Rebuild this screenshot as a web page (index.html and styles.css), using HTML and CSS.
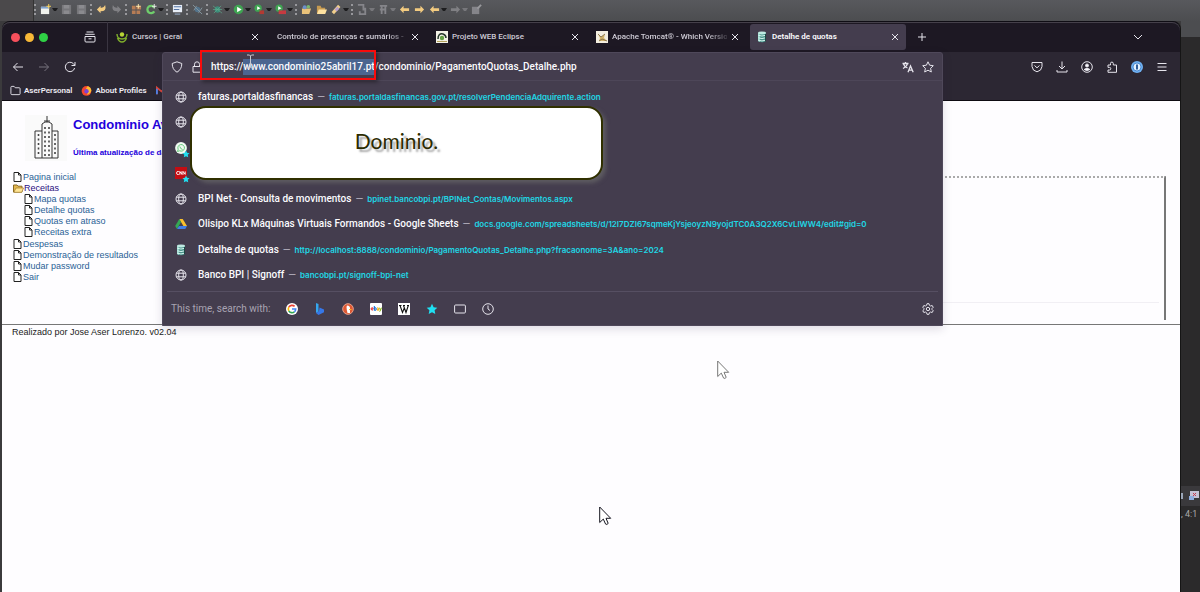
FILE: index.html
```html
<!DOCTYPE html>
<html lang="pt">
<head>
<meta charset="utf-8">
<title>Detalhe de quotas</title>
<link rel="stylesheet" href="styles.css">
</head>
<body>
<svg class="defs" aria-hidden="true">
  <symbol id="close" viewBox="0 0 8 8"><path d="M1 1l6 6M7 1L1 7"/></symbol>
  <symbol id="globe" viewBox="0 0 12 12"><circle cx="6" cy="6" r="5"/><ellipse cx="6" cy="6" rx="2.3" ry="5"/><path d="M1.3 4.2h9.4M1.3 7.8h9.4"/></symbol>
  <symbol id="star" viewBox="0 0 12 12"><path d="M6 .8l1.600 3.400 3.700.5-2.700 2.600.7 3.700L6 9.200 2.700 11l.7-3.700L.7 4.700l3.700-.5z"/></symbol>
  <symbol id="db" viewBox="0 0 12 12"><path d="M2 2v8q4 2.400 8 0V2z" fill="#4a948b"/><path d="M2 2v8q.8.7 1.800.9V2z" fill="#9fdcd2"/><ellipse cx="6" cy="2" rx="4" ry="1.400" fill="#bfeae2"/><path d="M2.300 4.300q3.700 1.500 7.200 0M2.300 6.800q3.700 1.500 7.200 0M2.300 9.200q3.700 1.500 7.200 0" fill="none" stroke="#d8f7f1"/><path d="M9.500 3v7.300" stroke="#1d4643" fill="none"/></symbol>
  <symbol id="doc" viewBox="0 0 9 10"><path d="M1 .5h4.500l2.500 2.500v6.500H1z" fill="#fff" stroke="#222"/><path d="M5.500.5V3H8" fill="none" stroke="#222"/></symbol>
  <symbol id="pointer" viewBox="0 0 13 20"><path d="M.7 1v15.500l3.600-3.400 2.300 5q1.200 1 2.600-.7L7 12.300h4.700z"/></symbol>
  <symbol id="disk" viewBox="0 0 12 12"><path d="M1 1h10v10H1z" fill="#77777b"/><path d="M3 1h6v4H3zM3 7h6v4H3z" fill="#8b8b8f"/></symbol>
  <symbol id="arrow" viewBox="0 0 12 12"><path d="M1 6l4-4v2.500h6v3H5V10z"/></symbol>
  <symbol id="bend" viewBox="0 0 12 12"><path d="M1 6l4-4v2q3 1 5-3 2 7-5 7v2z"/></symbol>
</svg>

<header class="ide" aria-label="Barra do IDE">
  <div class="ide-edge"></div>
  <div class="ide-tools">
    <i class="grip"></i>
    <svg class="tool" viewBox="0 0 12 12"><path d="M1 3h9v8H1z" fill="#f1f3ee"/><path d="M1 3h9v2H1z" fill="#7fa3d0"/><path d="M9.500 0v5M7 2.500h5" stroke="#ffd75a"/></svg><i class="caret"></i>
    <svg class="tool"><use href="#disk"/></svg><svg class="tool"><use href="#disk"/></svg>
    <i class="grip"></i>
    <svg class="tool gold"><use href="#bend"/></svg><svg class="tool dim flip"><use href="#bend"/></svg>
    <i class="grip"></i>
    <svg class="tool" viewBox="0 0 12 12"><path d="M1 2h4v4H1zM6 2h5v4H6zM1 7h4v4H1zM6 7h4v4H6z" fill="#b77d55"/><path d="M8 0v5M5.500 2.500h5" stroke="#ffe9ae"/></svg>
    <svg class="tool" viewBox="0 0 12 12"><path d="M9 8a4 4 0 1 1 0-4" fill="none" stroke="#6fce6c" stroke-width="2.500"/><path d="M9 0v5M6.500 2.500h5" stroke="#eee"/></svg><i class="caret"></i>
    <i class="grip"></i>
    <svg class="tool" viewBox="0 0 12 12"><path d="M1 1h10v8H1z" fill="#e8eef7"/><path d="M2 3h8M2 6h6" stroke="#47699d"/><path d="M3 11h6" stroke="#9fb7d7"/></svg>
    <i class="grip"></i>
    <svg class="tool" viewBox="0 0 12 12"><circle cx="6" cy="6" r="3" fill="#53748c"/><path d="M1 1l10 10M2 7l3-5M7 10l4-6" stroke="#8597a0"/></svg>
    <i class="grip"></i>
    <svg class="tool" viewBox="0 0 12 12"><ellipse cx="6" cy="6" rx="3" ry="3.500" fill="#3b8c79"/><path d="M1 2l10 8M1 6h10M2 10l8-8" stroke="#5fae8f" stroke-width=".7"/></svg><i class="caret"></i>
    <svg class="tool" viewBox="0 0 12 12"><circle cx="6" cy="6" r="5.200" fill="#3fa552"/><path d="M4.500 3l5 3-5 3z" fill="#fff"/></svg><i class="caret"></i>
    <svg class="tool" viewBox="0 0 12 12"><circle cx="4.500" cy="4.500" r="4" fill="#3fa552"/><path d="M3.500 2.500L7 4.500l-3.500 2z" fill="#fff"/><path d="M6 7h5v4H6z" fill="#b33a32"/></svg><i class="caret"></i>
    <svg class="tool" viewBox="0 0 12 12"><circle cx="4.500" cy="4.500" r="4" fill="#3fa552"/><path d="M3.500 2.500L7 4.500l-3.500 2z" fill="#fff"/><path d="M4 7h8v4H4z" fill="#c63a40"/></svg><i class="caret"></i>
    <i class="grip"></i>
    <svg class="tool" viewBox="0 0 12 12"><path d="M1 5h10l-2 6H1z" fill="#e9c27a"/><circle cx="4" cy="3.500" r="2.200" fill="#6d8fc9"/><circle cx="8" cy="3" r="2" fill="#7ab66f"/></svg>
    <svg class="tool" viewBox="0 0 12 12"><path d="M1 2h4l1 2h4v6H1z" fill="#c69a51"/><path d="M3 6h9l-2 5H1z" fill="#ffe2a0"/></svg>
    <svg class="tool" viewBox="0 0 12 12"><path d="M2 10l7-8" stroke="#f1cf8c" stroke-width="3.500"/><path d="M5 7l3-3" stroke="#b89fcf" stroke-width="3"/></svg><i class="caret"></i>
    <i class="grip"></i>
    <svg class="tool" viewBox="0 0 12 12"><path d="M1 1h6v6M9 4v7H3V8" stroke="#85858a" stroke-width="2" fill="none"/></svg><i class="caret faint"></i>
    <svg class="tool" viewBox="0 0 12 12"><path d="M2 2h8M8 2v9M2 6h5M4 3v8" stroke="#85858a" stroke-width="2" fill="none"/></svg><i class="caret faint"></i>
    <svg class="tool gold"><use href="#arrow"/></svg><svg class="tool gold flip"><use href="#arrow"/></svg>
    <svg class="tool gold"><use href="#arrow"/></svg><i class="caret"></i>
    <svg class="tool dim flip"><use href="#arrow"/></svg><i class="caret faint"></i>
    <svg class="tool" viewBox="0 0 12 12"><path d="M1 3h8v8H1z" fill="#85858a"/><path d="M7 5l4-4" stroke="#9a9a9e" stroke-width="2"/></svg>
  </div>
</header>

<div class="desk">
<div class="window">
  <div class="tabstrip">
    <div class="lights"><i class="red"></i><i class="yellow"></i><i class="green"></i></div>
    <button class="icon-btn view" aria-label="Firefox View"><svg class="ico" viewBox="0 0 12 12"><path d="M2.500 1h7M1.300 3.300h9.400M1 5.500v4.500q0 1 1 1h8q1 0 1-1V5.500zM4.500 7.800h3"/></svg></button>
    <nav class="tabs">
      <div class="tab"><svg class="fav" viewBox="0 0 12 12"><circle cx="6" cy="3.500" r="2.200" fill="#b8d435"/><path d="M1 3q0 5 5 5t5-5M1.500 7q1.500 4 4.500 4t4.500-4" fill="none" stroke="#7fae2b" stroke-width="1.400"/></svg><span class="label">Cursos | Geral</span><button class="x" aria-label="Fechar"><svg class="ico"><use href="#close"/></svg></button></div>
      <div class="tab plain"><span class="label fade">Controlo de presenças e sumários -</span><button class="x" aria-label="Fechar"><svg class="ico"><use href="#close"/></svg></button></div>
      <div class="tab"><svg class="fav" viewBox="0 0 12 12"><path d="M0 0h12v12H0z" fill="#f3f2e6"/><path d="M2 8q0-6 5-5 3 1 3 4" fill="none" stroke="#26372b" stroke-width="1.500"/><circle cx="6" cy="7" r="2.200" fill="#65a244"/><path d="M1 10.500h10" stroke="#b3a15b"/></svg><span class="label">Projeto WEB Eclipse</span><button class="x" aria-label="Fechar"><svg class="ico"><use href="#close"/></svg></button></div>
      <div class="tab"><svg class="fav" viewBox="0 0 12 12"><path d="M0 0h12v12H0z" fill="#f4efe0"/><path d="M2 3l3 3 4-3-1 4 3 3H3l1-3z" fill="#d3b56c"/><path d="M2 3l3 3 4-3M3 10l3-2 5 2" fill="none" stroke="#7a643c" stroke-width=".8"/></svg><span class="label fade">Apache Tomcat® - Which Versio</span><button class="x" aria-label="Fechar"><svg class="ico"><use href="#close"/></svg></button></div>
      <div class="tab active"><svg class="fav"><use href="#db"/></svg><span class="label">Detalhe de quotas</span><button class="x" aria-label="Fechar"><svg class="ico"><use href="#close"/></svg></button></div>
    </nav>
    <button class="icon-btn plus" aria-label="Novo separador"><svg class="ico" viewBox="0 0 10 10"><path d="M5 1v8M1 5h8"/></svg></button>
    <button class="icon-btn all-tabs" aria-label="Listar separadores"><svg class="ico" viewBox="0 0 10 10"><path d="M1 3l4 4 4-4"/></svg></button>
  </div>

  <div class="toolbox">
    <div class="left-bars">
      <div class="nav-buttons">
        <button class="icon-btn" aria-label="Anterior"><svg class="ico" viewBox="0 0 12 12"><path d="M11 6H1.500M5.500 2l-4 4 4 4"/></svg></button>
        <button class="icon-btn off" aria-label="Seguinte"><svg class="ico" viewBox="0 0 12 12"><path d="M1 6h9.500M6.500 2l4 4-4 4"/></svg></button>
        <button class="icon-btn" aria-label="Recarregar"><svg class="ico" viewBox="0 0 12 12"><path d="M10.600 7A4.700 4.700 0 1 1 9.500 2.800L11 4.300M11 1v3.500H7.500"/></svg></button>
      </div>
      <div class="bookmarks">
        <button class="bm"><svg class="ico" viewBox="0 0 12 12"><path d="M1 2.500q0-1 1-1h2.500l1.200 1.500H10q1 0 1 1v5.500q0 1-1 1H2q-1 0-1-1z"/></svg>AserPersonal</button>
        <button class="bm"><svg class="fav" viewBox="0 0 12 12"><circle cx="6" cy="6.500" r="5.300" fill="#f5452f"/><path d="M7 1q4 1.500 4.300 5-1 4-5 4.500Q9 7 5 3q2 .5 2-2z" fill="#ffbd2f"/><circle cx="6" cy="6.800" r="2.400" fill="#7a45d8"/></svg>About Profiles</button>
        <button class="bm" aria-label="Gmail"><svg class="fav" viewBox="0 0 12 12"><path d="M1 10V3l5 4 5-4v7" fill="none" stroke="#d9453a" stroke-width="2"/><path d="M1 10V4" stroke="#4d82e8" stroke-width="2"/></svg></button>
      </div>
    </div>

    <div class="urlbar-slot">
      <div class="urlbar">
        <div class="field">
          <svg class="ico" viewBox="0 0 12 12"><path d="M6 .8L10.800 2.500Q10.800 8.500 6 11.200 1.200 8.500 1.200 2.500z"/></svg>
          <svg class="ico lock" viewBox="0 0 12 12"><path d="M2 5.500h8v5.700H2zM3.500 5.500V3.300a2.500 2.500 0 0 1 5 0v2.200"/></svg>
          <input id="url" class="url" type="text" aria-label="Endereço" spellcheck="false" value="https://www.condominio25abril17.pt/condominio/PagamentoQuotas_Detalhe.php">
          <button class="icon-btn" aria-label="Traduzir"><svg class="ico" viewBox="0 0 12 12"><path d="M.5 2.500h6M3.500 1v1.500M5.500 2.500Q5 5.500 1 7.500M1.500 3q1 3 4 4M6 11.300L8.500 5l2.700 6.300M7 9.200h3.300" stroke-width="1.300"/></svg></button>
          <button class="icon-btn" aria-label="Marcador"><svg class="ico"><use href="#star"/></svg></button>
        </div>
        <ul class="results">
          <li><svg class="ico"><use href="#globe"/></svg><b>faturas.portaldasfinancas</b><i>—</i><a href="#">faturas.portaldasfinancas.gov.pt/resolverPendenciaAdquirente.action</a></li>
          <li><svg class="ico"><use href="#globe"/></svg></li>
          <li><span class="marked"><svg class="fav" viewBox="0 0 12 12"><circle cx="6" cy="6" r="5.900" fill="#f2faf3"/><path d="M2.500 9.500l.7-2.200a3.300 3.300 0 1 1 1.500 1.500z" fill="none" stroke="#67c97c"/><path d="M4.800 4.500q.5 2.500 2.800 3" fill="none" stroke="#67c97c"/></svg><svg class="badge"><use href="#star"/></svg></span></li>
          <li><span class="marked"><svg class="fav" viewBox="0 0 12 12"><path d="M0 0h12v12H0z" fill="#c30d13"/><path d="M3.800 4.500Q1.500 4 1.500 6t2.300 1.500M4.800 7.800V4.400l2 3V4.400M8 7.800V4.400l2.200 3V4.400" fill="none" stroke="#fff" stroke-width=".9"/></svg><svg class="badge"><use href="#star"/></svg></span></li>
          <li><svg class="ico"><use href="#globe"/></svg><b>BPI Net - Consulta de movimentos</b><i>—</i><a href="#">bpinet.bancobpi.pt/BPINet_Contas/Movimentos.aspx</a></li>
          <li><svg class="fav" viewBox="0 0 12 12"><path d="M4.300 1h3.400L12 8H8.400z" fill="#fbc02d"/><path d="M4.300 1L6 4 2 11 .2 8z" fill="#34a853"/><path d="M4 8h8l-1.700 3H2z" fill="#3f7fe8"/></svg><b>Olisipo KLx Máquinas Virtuais Formandos - Google Sheets</b><i>—</i><a href="#">docs.google.com/spreadsheets/d/12I7DZI67sqmeKjYsjeoyzN9yojdTC0A3Q2X6CvLlWW4/edit#gid=0</a></li>
          <li><svg class="fav"><use href="#db"/></svg><b>Detalhe de quotas</b><i>—</i><a href="#">http://localhost:8888/condominio/PagamentoQuotas_Detalhe.php?fracaonome=3A&amp;ano=2024</a></li>
          <li><svg class="ico"><use href="#globe"/></svg><b>Banco BPI | Signoff</b><i>—</i><a href="#">bancobpi.pt/signoff-bpi-net</a></li>
        </ul>
        <div class="engines">
          <span class="engines-label">This time, search with:</span>
          <button class="engine" aria-label="Google"><svg class="fav" viewBox="0 0 12 12"><circle cx="6" cy="6" r="6" fill="#fff"/><g fill="none" stroke-width="1.600"><path d="M8.600 3.400A3.700 3.700 0 0 0 2.800 4.200" stroke="#ea4335"/><path d="M2.800 4.200a3.700 3.700 0 0 0 0 3.600" stroke="#fbbc05"/><path d="M2.800 7.800a3.700 3.700 0 0 0 5.600 1" stroke="#34a853"/><path d="M8.400 8.800Q9.700 7.800 9.700 6H6" stroke="#4285f4"/></g></svg></button>
          <button class="engine" aria-label="Bing"><svg class="fav" viewBox="0 0 12 12"><path d="M2 0l2.500 1v7.500L2 10z" fill="#35a6ee"/><path d="M2 10l3-2 .5-3.500L10 6.500v2.700L4.500 12z" fill="#3677e8"/></svg></button>
          <button class="engine" aria-label="DuckDuckGo"><svg class="fav" viewBox="0 0 12 12"><circle cx="6" cy="6" r="5.300" fill="#de5833" stroke="#e9a28c"/><path d="M5 2.500q3.500 0 3 4L8 10H5.500q-1-4-1-6z" fill="#fff"/><path d="M7 6.500h2.500" stroke="#fdb52a"/></svg></button>
          <button class="engine" aria-label="eBay"><svg class="fav" viewBox="0 0 12 12"><rect width="12" height="12" rx="1" fill="#fff"/><g fill="none" stroke-width="1"><path d="M1 6h2.200Q3 4.500 2 4.600 1 5 1 6q.3 1.500 2 1" stroke="#e53238"/><path d="M4.300 3v4.500M4.300 5q2-1 2 1t-2 1" stroke="#0064d2"/><path d="M7 5q1.700-.5 1.700.7v1.500H7.300q-.6-1 1.400-1.200" stroke="#f5af02"/><path d="M9.500 4.700l1 2.500 1-2.500M10.500 7l-.8 1.700" stroke="#86b817"/></g></svg></button>
          <button class="engine" aria-label="Wikipedia"><svg class="fav" viewBox="0 0 12 12"><path d="M0 0h12v12H0z" fill="#fff"/><path d="M1 2.500h2.500M5 2.500h2M9 2.500h2M2 2.500L4.500 9.500 6.500 4.500M5.500 2.500L8 9.500l2.300-7" fill="none" stroke="#111" stroke-width="1.100"/></svg></button>
          <button class="engine" aria-label="Marcadores"><svg class="fav cyan"><use href="#star"/></svg></button>
          <button class="engine" aria-label="Separadores"><svg class="ico" viewBox="0 0 12 12"><rect x=".6" y="2" width="10.800" height="8" rx="1"/></svg></button>
          <button class="engine" aria-label="Histórico"><svg class="ico" viewBox="0 0 12 12"><circle cx="6" cy="6" r="5.300"/><path d="M6 2.500V6l2 1.500"/></svg></button>
          <button class="engine gear" aria-label="Definições"><svg class="ico" viewBox="0 0 12 12"><path d="M5 .7h2l.4 1.600 1.200.7 1.600-.5 1 1.800L10 5.500v1l1.200 1.200-1 1.800L8.600 9l-1.200.7L7 11.300H5l-.4-1.600L3.400 9l-1.600.5-1-1.800L2 6.500v-1L.8 4.300l1-1.800L3.400 3l1.200-.7z"/><circle cx="6" cy="6" r="1.700"/></svg></button>
        </div>
        <div class="highlight-box"></div>
        <svg class="ibeam" viewBox="0 0 9 15"><path d="M1 1h2.500l1 1 1-1H8M4.500 2v11M1 14h2.500l1-1 1 1H8M3 10h3"/></svg>
        <div class="callout">Dominio.</div>
      </div>
    </div>

    <div class="actions">
      <button class="icon-btn" aria-label="Pocket"><svg class="ico" viewBox="0 0 12 12"><path d="M1 1.500h10v4Q10.500 10 6 10.800 1.500 10 1 5.500zM3.500 4.500L6 6.800l2.500-2.300"/></svg></button>
      <button class="icon-btn" aria-label="Transferências"><svg class="ico" viewBox="0 0 12 12"><path d="M6 .5v7.500M3 5l3 3 3-3M1 9v2h10V9"/></svg></button>
      <button class="icon-btn" aria-label="Conta"><svg class="ico" viewBox="0 0 12 12"><circle cx="6" cy="6" r="5.300"/><circle cx="6" cy="4.500" r="1.500" fill="#fbfbfe"/><path d="M3 8.500q3-2.500 6 0-3 2-6 0z" fill="#fbfbfe"/></svg></button>
      <button class="icon-btn" aria-label="Extensões"><svg class="ico" viewBox="0 0 12 12"><path d="M2 4h2.500V2.500a1.400 1.400 0 0 1 2.800 0V4H10.500v7.300H2V9h1.500a1.300 1.300 0 0 0 0-2.600H2z"/></svg></button>
      <button class="icon-btn" aria-label="1Password"><svg class="fav" viewBox="0 0 12 12"><circle cx="6" cy="6" r="6" fill="#6fb0f2"/><circle cx="6" cy="6" r="4" fill="#e3f1ff" stroke="#3277c4" stroke-width=".8"/><path d="M6 3.500v5" stroke="#1c4d91" stroke-width="1.800"/></svg></button>
      <button class="icon-btn" aria-label="Menu"><svg class="ico" viewBox="0 0 12 12"><path d="M1.500 2.500h9M1.500 6h9M1.500 9.500h9"/></svg></button>
    </div>
  </div>

  <div class="page">
    <div class="frames">
      <aside class="side">
        <div class="brand">
          <svg class="building" viewBox="0 0 42 46"><path d="M0 0h42v46H0z" fill="#fafafa"/><path d="M10 43V16h7V9l3-2h4l3 2v7h6v27zM17 16v27M27 16v27M22 1v6M19 6h6" fill="none" stroke="#333"/><path d="M13.500 19v22M20 12v29M24 12v29M30 19v22" stroke="#444" stroke-width="1.600" stroke-dasharray="2 2.500" fill="none"/></svg>
          <div>
            <h1>Condomínio Av. 25</h1>
            <h2>Última atualização de dados</h2>
          </div>
        </div>
        <ul class="menu">
          <li><svg class="doc"><use href="#doc"/></svg><a href="#">Pagina inicial</a></li>
          <li><svg class="folder" viewBox="0 0 11 9"><path d="M.5 8V1h3.500l1 1.200h4V8z" fill="#e3b850" stroke="#8b6b25"/><path d="M.8 8.300L3 4h7.600L8.700 8.300z" fill="#ffe493" stroke="#a27d2d" stroke-width=".7"/></svg><a href="#" class="seen">Receitas</a>
            <ul>
              <li><svg class="doc"><use href="#doc"/></svg><a href="#">Mapa quotas</a></li>
              <li><svg class="doc"><use href="#doc"/></svg><a href="#">Detalhe quotas</a></li>
              <li><svg class="doc"><use href="#doc"/></svg><a href="#">Quotas em atraso</a></li>
              <li><svg class="doc"><use href="#doc"/></svg><a href="#">Receitas extra</a></li>
            </ul></li>
          <li><svg class="doc"><use href="#doc"/></svg><a href="#">Despesas</a></li>
          <li><svg class="doc"><use href="#doc"/></svg><a href="#">Demonstração de resultados</a></li>
          <li><svg class="doc"><use href="#doc"/></svg><a href="#">Mudar password</a></li>
          <li><svg class="doc"><use href="#doc"/></svg><a href="#">Sair</a></li>
        </ul>
      </aside>
      <main class="content"><div class="content-foot"></div></main>
    </div>
    <footer class="page-foot">Realizado por Jose Aser Lorenzo. v02.04</footer>
    <svg class="pointer grey"><use href="#pointer"/></svg>
    <svg class="pointer dark"><use href="#pointer"/></svg>
  </div>
</div>
<aside class="right-strip">
  <div class="tray"><svg class="tray-icon" viewBox="0 0 18 10"><path d="M0 2h2v6H0z" fill="#9aa6b8"/><path d="M9 0h9v7H9z" fill="#c6c2d6"/><path d="M12 2l3 3M15 2l-3 3" stroke="#c63a50"/><path d="M8 5h5v4H8z" fill="#8facdf"/></svg></div>
  <div class="clock">, 4:1</div>
</aside>
</div>
<script src="script.js"></script>
</body>
</html>
```
FILE: styles.css
```css
* { box-sizing: border-box; }
body {
  margin: 0;
  min-height: 100vh;
  display: flex;
  flex-direction: column;
  overflow: hidden;
  background: #525357;
  font-family: Roboto, "Liberation Sans", sans-serif;
  font-size: 9px;
}
ul { list-style: none; margin: 0; padding: 0; }
button { border: 0; padding: 0; background: none; color: inherit; font: inherit; }
a { text-decoration: none; color: inherit; }
.defs { display: none; }
.ico { width: 12px; height: 12px; flex: none; fill: none; stroke: #e6e4ec; stroke-width: 1; }
.fav { width: 12px; height: 12px; flex: none; }

/* IDE toolbar behind the browser */
.ide { display: flex; height: 21px; background: linear-gradient(#58595d, #4c4d50); }
.ide-edge { width: 34px; background: #4b494b; border-right: 1px solid #333; flex: none; }
.ide-tools { display: flex; align-items: center; gap: 2px; padding-bottom: 3px; }
.grip { width: 3px; height: 11px; border-left: 2px dotted #98989c; }
.tool { width: 13px; height: 11px; }
.caret { width: 6px; margin-left: -2px; border: 2px solid transparent; border-top: 3px solid #1d1d1f; border-bottom: 0; }
.caret.faint { border-top-color: #77777b; }
.gold { fill: #f3cb80; }
.dim { fill: #808084; }
.flip { transform: scaleX(-1); }

.desk { flex: 1; display: flex; padding-left: 2px; background: #3b3a3c; }
.window {
  flex: 1;
  min-width: 0;
  display: flex;
  flex-direction: column;
  border-top: 1px solid #0f0d14;
  border-right: 1px solid #151515;
  border-radius: 8px 8px 0 0;
  background: #1d1823;
}

/* Tabs */
.tabstrip { height: 30px; display: flex; align-items: center; box-shadow: inset 0 1px #45404a; border-radius: 8px 8px 0 0; }
.lights { display: flex; gap: 5px; padding-left: 9px; }
.lights i { width: 9px; height: 9px; border-radius: 50%; }
.red { background: #f6505c; }
.yellow { background: #f7b837; }
.green { background: #2fd145; }
.icon-btn { display: flex; align-items: center; justify-content: center; flex: none; }
.view { width: 60px; padding-left: 36px; justify-content: flex-start; height: 100%; border-right: 1px solid #3a3541; }
.tabs { display: flex; align-self: stretch; }
.tab {
  width: 156px;
  margin: 2px;
  padding: 0 7px 0 6px;
  display: flex;
  align-items: center;
  gap: 4px;
  color: #cfccd6;
  font-size: 8px;
  font-weight: 500;
  border-radius: 3px;
}
.tab.active { background: #443d4e; color: #fbfbfe; font-weight: 600; }
.tab.plain { padding-left: 7px; }
.label { flex: 1; overflow: hidden; white-space: nowrap; line-height: 12px; }
.fade { mask-image: linear-gradient(90deg, #000 calc(100% - 20px), rgba(0, 0, 0, .2)); }
.x .ico { width: 8px; height: 8px; display: block; }
.plus { width: 28px; }
.plus .ico, .all-tabs .ico { width: 10px; height: 10px; }
.all-tabs { margin-left: auto; margin-right: 37px; }

/* Navigation */
.toolbox { display: flex; height: 49px; background: #2c2733; border-bottom: 1px solid #0e0b12; }
.left-bars { width: 160px; flex: none; overflow: hidden; }
.nav-buttons { display: flex; gap: 14px; height: 29px; align-items: center; padding-left: 10px; }
.off { opacity: .4; }
.bookmarks { display: flex; gap: 9px; height: 19px; align-items: center; padding-left: 8px; color: #efedf4; font-size: 8px; font-weight: 600; }
.bm { display: flex; align-items: center; gap: 3px; flex: none; white-space: nowrap; }
.bm .ico, .bm .fav { width: 11px; height: 11px; }
.actions { display: flex; gap: 13px; flex: none; height: 29px; align-items: center; padding: 0 12px 0 88px; }

/* Address bar with open suggestions */
.urlbar-slot { position: relative; flex: 1; min-width: 0; }
.urlbar {
  position: absolute;
  inset: 0 0 auto;
  z-index: 2;
  background: #443d4e;
  border: 1px solid #4f485a;
  border-radius: 3px 3px 0 0;
  box-shadow: 0 3px 10px rgba(40, 30, 70, .15);
  color: #fbfbfe;
}
.field { display: flex; align-items: center; height: 28px; padding: 0 8px 0 8px; gap: 8px; border-bottom: 1px solid #4d4658; }
.url { flex: 1; min-width: 0; padding: 0; border: 0; outline: 0; background: none; color: #fbfbfe; font: 500 10px/16px Roboto, sans-serif; }
.url::selection { background: #4b6590; color: #fbfbfe; }
.results { display: grid; grid-auto-rows: 1fr; height: 204px; margin-top: 3px; }
.results li { display: flex; align-items: center; padding-left: 12px; white-space: nowrap; font-size: 10px; line-height: 12px; }
.results b { margin-left: 11px; font-weight: 500; }
.results i { margin: 0 4px; color: #b5b0be; font-style: normal; }
.results a { color: #1fd8e6; font-family: Inter, sans-serif; font-size: 8px; font-weight: 600; }
.marked { position: relative; display: flex; }
.badge { position: absolute; right: -3px; bottom: -4px; width: 8px; height: 8px; fill: #1fe0f2; }
.engines { display: flex; align-items: center; gap: 16px; height: 34px; margin: 3px 4px 0; padding: 0 4px; border-top: 1px solid #564f62; }
.engines-label { color: #a9a4b2; font-size: 10px; white-space: nowrap; }
.engine { display: flex; }
.gear { margin-left: auto; }
.cyan { fill: #1fe0f2; }

/* Annotations over the address bar */
.highlight-box { position: absolute; left: 37px; top: -3px; width: 176px; height: 30px; border: 2px solid #f90b0b; box-shadow: 2px 2px 4px rgba(0, 0, 0, .4); pointer-events: none; }
.ibeam { position: absolute; left: 83px; top: 1px; width: 9px; height: 15px; fill: none; stroke: #c9c9cf; }
.callout {
  position: absolute;
  left: 27px;
  top: 53px;
  width: 413px;
  height: 74px;
  display: flex;
  align-items: center;
  justify-content: center;
  padding-bottom: 4px;
  background: #fff;
  border: 2px solid #303000;
  border-radius: 16px;
  box-shadow: 3px 3px 4px rgba(105, 105, 105, .7);
  color: #2b2b00;
  font: 400 21px/28px Lato, sans-serif;
  text-shadow: 3px 3px 2px rgba(0, 0, 0, .35);
}

/* Page */
.page { position: relative; flex: 1; background: #fefdff; font-family: "Liberation Sans", Arial, sans-serif; }
.frames { display: flex; height: 224px; border-bottom: 1px solid #777; }
.side { width: 260px; flex: none; }
.brand { display: flex; gap: 5px; padding: 14px 0 0 22px; height: 71px; white-space: nowrap; color: #2200dc; }
.building { width: 44px; height: 46px; flex: none; }
.brand h1 { margin: 2px 0 0; font-size: 13px; line-height: 16px; }
.brand h2 { margin: 14px 0 0; font-size: 8px; line-height: 12px; }
.menu { padding-left: 11px; font-size: 9px; line-height: 11px; }
.menu ul { padding-left: 11px; padding-bottom: 1px; }
.menu a { color: #2a6296; }
.menu .seen { color: #2a0d80; }
.doc { width: 9px; height: 10px; margin-right: 1px; vertical-align: -2px; }
.folder { width: 11px; height: 9px; vertical-align: -2px; }
.content { flex: 1; margin: 75px 14px 4px 0; border-top: 2px dotted #aaa; border-right: 2px solid #777; display: flex; flex-direction: column; justify-content: flex-end; }
.content-foot { height: 18px; border-top: 1px solid #f1eff4; margin-right: 5px; }
.page-foot { padding: 1px 10px; font-size: 9px; line-height: 13px; color: #222; }
.pointer { position: absolute; width: 13px; height: 20px; fill: #fff; }
.grey { left: 715px; top: 259px; stroke: #777; }
.dark { left: 597px; top: 405px; stroke: #15151f; }

/* Desktop at the right edge */
.right-strip { width: 19px; flex: none; padding-top: 465px; background: linear-gradient(#4c4d50 16px, #2b2a2b 16px); color: #aaa; }
.tray { height: 20px; padding-top: 5px; background: #3a393c; }
.tray-icon { width: 18px; height: 10px; display: block; }
.clock { padding-top: 3px; white-space: nowrap; font-size: 9px; }
```
FILE: script.js
```js
// Opens the address bar with the domain part selected.
const url = document.getElementById("url");
const start = url.value.indexOf("www.");
const end = url.value.indexOf("/", start);
url.focus();
url.setSelectionRange(start, end);
```
